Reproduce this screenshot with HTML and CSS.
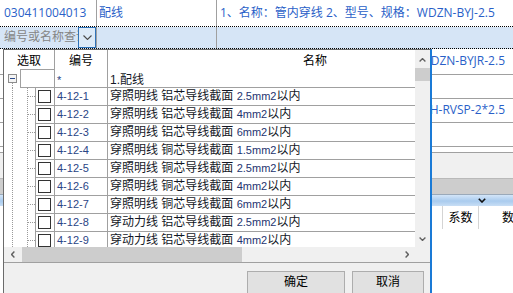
FILE: index.html
```html
<!DOCTYPE html>
<html lang="zh-CN">
<head>
<meta charset="utf-8">
<title>清单编辑</title>
<link rel="stylesheet" href="styles.css">
</head>
<body>
<div class="page">
  <div class="list">
    <div class="row r1">
      <div class="c c1">030411004013</div>
      <div class="c c2">配线</div>
      <div class="c c3">1、名称：管内穿线 2、型号、规格：WDZN-BYJ-2.5</div>
    </div>
    <div class="row r2">
      <div class="c c1 editor">
        <span class="ph">编号或名称查询</span>
        <span class="ddbtn"><svg width="9" height="5" viewBox="0 0 9 5"><polyline points="0.5,0.5 4.5,4.5 8.5,0.5" fill="none" stroke="#4a4a4a" stroke-width="1.1"/></svg></span>
      </div>
      <div class="c c2"></div>
      <div class="c c3"></div>
    </div>
    <div class="row r3">
      <div class="c c1"></div>
      <div class="c c2"></div>
      <div class="c c3 tail">WDZN-BYJR-2.5</div>
    </div>
    <div class="row r4"><div class="c c1"></div><div class="c c2"></div><div class="c c3"></div></div>
    <div class="row r5">
      <div class="c c1"></div>
      <div class="c c2"></div>
      <div class="c c3 tail">NH-RVSP-2*2.5</div>
    </div>
    <div class="row r6"><div class="c c1"></div><div class="c c2"></div><div class="c c3"></div></div>
    <div class="row r7"></div>
  </div>
  <div class="under-track"></div>
  <div class="under-thumb"></div>
  <div class="splitter"><svg width="8" height="5" viewBox="0 0 8 5"><polyline points="0.8,0.8 4,4 7.2,0.8" fill="none" stroke="#111" stroke-width="1.6"/></svg></div>
  <div class="detail-head">
    <div class="dh dh-pad"></div>
    <div class="dh dh-coef">系数</div>
    <div class="dh dh-qty">数量</div>
  </div>
</div>

<div class="dropdown">
  <div class="dd-main">
    <div class="tree">
      <div class="thead">
        <div class="th th-sel">选取</div>
        <div class="th th-code">编号</div>
        <div class="th th-name">名称</div>
      </div>
      <div class="node root">
        <div class="exp"><svg width="9" height="9" viewBox="0 0 9 9"><rect x="0.5" y="0.5" width="8" height="8" fill="#f4f4f4" stroke="#8c8c8c"/><path d="M2 4.5h5" stroke="#2a4a8a"/></svg></div>
        <div class="rootbox"></div>
        <div class="td code">*</div>
        <div class="td name">1.配线</div>
      </div>
      <div class="node child">
        <div class="indent"></div><div class="chkcell"><span class="chk"></span></div>
        <div class="td code">4-12-1</div>
        <div class="td name">穿照明线 铝芯导线截面 <span class="n">2.5mm2</span>以内</div>
      </div>
      <div class="node child">
        <div class="indent"></div><div class="chkcell"><span class="chk"></span></div>
        <div class="td code">4-12-2</div>
        <div class="td name">穿照明线 铝芯导线截面 <span class="n">4mm2</span>以内</div>
      </div>
      <div class="node child">
        <div class="indent"></div><div class="chkcell"><span class="chk"></span></div>
        <div class="td code">4-12-3</div>
        <div class="td name">穿照明线 铝芯导线截面 <span class="n">6mm2</span>以内</div>
      </div>
      <div class="node child">
        <div class="indent"></div><div class="chkcell"><span class="chk"></span></div>
        <div class="td code">4-12-4</div>
        <div class="td name">穿照明线 铜芯导线截面 <span class="n">1.5mm2</span>以内</div>
      </div>
      <div class="node child">
        <div class="indent"></div><div class="chkcell"><span class="chk"></span></div>
        <div class="td code">4-12-5</div>
        <div class="td name">穿照明线 铜芯导线截面 <span class="n">2.5mm2</span>以内</div>
      </div>
      <div class="node child">
        <div class="indent"></div><div class="chkcell"><span class="chk"></span></div>
        <div class="td code">4-12-6</div>
        <div class="td name">穿照明线 铜芯导线截面 <span class="n">4mm2</span>以内</div>
      </div>
      <div class="node child">
        <div class="indent"></div><div class="chkcell"><span class="chk"></span></div>
        <div class="td code">4-12-7</div>
        <div class="td name">穿照明线 铜芯导线截面 <span class="n">6mm2</span>以内</div>
      </div>
      <div class="node child">
        <div class="indent"></div><div class="chkcell"><span class="chk"></span></div>
        <div class="td code">4-12-8</div>
        <div class="td name">穿动力线 铝芯导线截面 <span class="n">2.5mm2</span>以内</div>
      </div>
      <div class="node child">
        <div class="indent"></div><div class="chkcell"><span class="chk"></span></div>
        <div class="td code">4-12-9</div>
        <div class="td name">穿动力线 铝芯导线截面 <span class="n">4mm2</span>以内</div>
      </div>
    </div>
    <div class="vscroll">
      <div class="sbtn up"><svg width="7" height="4" viewBox="0 0 7 4"><polyline points="0.6,3.4 3.5,0.6 6.4,3.4" fill="none" stroke="#606060" stroke-width="1.4"/></svg></div>
      <div class="vthumb"></div>
      <div class="sfill"></div>
      <div class="sbtn down"><svg width="7" height="4" viewBox="0 0 7 4"><polyline points="0.6,0.6 3.5,3.4 6.4,0.6" fill="none" stroke="#606060" stroke-width="1.4"/></svg></div>
    </div>
  </div>
  <div class="dd-hbar">
    <div class="hscroll">
      <div class="sbtn hb"><svg width="4" height="7" viewBox="0 0 4 7"><polyline points="3.4,0.6 0.6,3.5 3.4,6.4" fill="none" stroke="#606060" stroke-width="1.4"/></svg></div>
      <div class="hthumb"></div>
      <div class="sfill"></div>
      <div class="sbtn hb"><svg width="4" height="7" viewBox="0 0 4 7"><polyline points="0.6,0.6 3.4,3.5 0.6,6.4" fill="none" stroke="#606060" stroke-width="1.4"/></svg></div>
    </div>
    <div class="corner"></div>
  </div>
  <div class="dd-foot">
    <button class="btn btn-ok">确定</button>
    <button class="btn btn-cancel">取消</button>
  </div>
</div>
</body>
</html>
```

FILE: styles.css
```css
* { box-sizing: border-box; margin: 0; padding: 0; }
html, body { width: 513px; height: 293px; overflow: hidden; background: #fff; }
body { position: relative; font-family: "Open Sans", "Noto Sans CJK SC", sans-serif; font-size: 12px; }

/* underlying list */
.row { display: flex; border-bottom: 1px solid #a0a0a0; }
.c { flex: none; overflow: hidden; white-space: nowrap; color: #2a5fc8; }
.c1 { width: 97px; border-right: 1px solid #a0a0a0; padding-left: 4px; }
.c2 { width: 120px; border-right: 1px solid #a0a0a0; padding-left: 2px; }
.c3 { flex: 1; padding-left: 3px; }
.c3.tail { text-align: right; padding-right: 8px; }

.r1 { height: 27px; line-height: 26px; border-bottom: 1px dotted #000; }
.r2 { height: 22px; background: #d6e5f6; border-bottom: 1px dotted #000; }
.r3 { height: 26px; line-height: 23px; }
.r4, .r6 { height: 24px; }
.r5 { height: 24px; line-height: 22px; }
.r7 { height: 6px; }

.editor { display: flex; padding-left: 0; }
.ph { width: 78px; overflow: hidden; padding-left: 4px; color: #858585; line-height: 20px; }
.ddbtn { width: 18px; height: 21px; border: 1px solid #2f73b9; background: #dceaf8; display: flex; align-items: center; justify-content: center; }

.under-track { height: 26px; background: #f0f0f0; border-bottom: 1px solid #b9b9b9; }
.under-thumb { height: 16px; background: #cdcdcd; border-bottom: 1px solid #9aa9b9; }
.splitter { height: 11px; background: linear-gradient(#d3e5f8, #a9cbee 55%, #c8def5); display: flex; justify-content: flex-end; align-items: center; padding-right: 27px; }
.detail-head { display: flex; height: 23px; line-height: 23px; color: #000; }
.dh { flex: none; text-align: center; }
.dh-pad { width: 443px; border-right: 1px solid #d4d4d4; }
.dh-coef { width: 36px; border-right: 1px solid #d4d4d4; }
.dh-qty { width: 70px; }

/* dropdown */
.dropdown { position: absolute; left: 3px; top: 49px; width: 429px; height: 250px; background: #fff;
  border-left: 1px solid #6b6b6b; border-top: 1px solid #6b6b6b; border-right: 2px solid #1a7ad6;
  display: flex; flex-direction: column; font-family: "Liberation Sans", "Noto Sans CJK SC", sans-serif; font-size: 12px; }
.dd-main { display: flex; height: 197px; flex: none; }
.tree { width: 411px; flex: none; overflow: hidden; }
.thead { display: flex; height: 19px; padding-top: 4px; line-height: 15px; color: #000; }
.th { flex: none; text-align: center; }
.th-sel { width: 51px; border-right: 1px solid #a0a0a0; margin-top: -4px; padding-top: 4px; }
.th-code { width: 53px; border-right: 1px solid #a0a0a0; margin-top: -4px; padding-top: 4px; }
.th-name { width: 414px; }

.node { display: flex; height: 18px; line-height: 17px; }
.node.root { height: 19px; }
.root .td { line-height: 18px; padding-top: 2px; color: #000; }
.exp { width: 16px; flex: none; padding: 5px 0 0 4px;
  background: repeating-linear-gradient(#9a9a9a 0 1px, transparent 1px 2px) 8px 14px / 1px 5px no-repeat; }
.exp svg { display: block; }
.rootbox { width: 35px; flex: none; border: 1px solid #a0a0a0; }
.indent { width: 31px; flex: none;
  background:
    repeating-linear-gradient(to right, #9a9a9a 0 1px, transparent 1px 2px) 24px 8px / 7px 1px no-repeat,
    repeating-linear-gradient(#9a9a9a 0 1px, transparent 1px 2px) 8px 0 / 1px 100% no-repeat,
    repeating-linear-gradient(#9a9a9a 0 1px, transparent 1px 2px) 23px 0 / 1px 100% no-repeat; }
.chkcell { width: 20px; flex: none; border-left: 1px solid #a0a0a0; border-right: 1px solid #a0a0a0; border-bottom: 1px solid #a0a0a0; padding: 2px 0 0 2px; }
.chk { display: block; width: 13px; height: 13px; border: 1px solid #333; background: #fff; }
.td { flex: none; border-bottom: 1px solid #a0a0a0; white-space: nowrap; overflow: hidden; }
.td.code { width: 53px; border-right: 1px solid #a0a0a0; padding-left: 2px; font-size: 11px; color: #2a4585; }
.td.name { width: 414px; padding-left: 2px; color: #141826; }
.n { font-size: 11px; color: #1e3470; }

.vscroll { width: 15px; flex: none; background: #f0f0f0; display: flex; flex-direction: column; }
.sbtn { flex: none; height: 17px; display: flex; align-items: center; justify-content: center; }
.sbtn.up { padding-top: 2px; }
.sbtn svg { display: block; }
.vthumb { flex: none; height: 13px; margin-top: 1px; background: #cdcdcd; }
.sfill { flex: 1; }
.dd-hbar { display: flex; height: 15px; flex: none; }
.hscroll { width: 411px; flex: none; display: flex; background: #f0f0f0; }
.sbtn.hb { width: 17px; height: 15px; }
.hthumb { flex: none; width: 220px; margin-left: 1px; background: #cdcdcd; }
.corner { flex: 1; background: #f0f0f0; }

.dd-foot { flex: none; height: 40px; border-top: 1px solid #a0a0a0; background: #f0f0f0;
  display: flex; justify-content: flex-end; align-items: flex-start; gap: 7px; padding: 8px 6px 0 0; }
.btn { flex: none; height: 23px; border: 1px solid #adadad; background: #e1e1e1; color: #000;
  font-family: "Liberation Sans", "Noto Sans CJK SC", sans-serif; font-size: 12px; line-height: 21px; }
.btn-ok { width: 98px; }
.btn-cancel { width: 72px; }
```
